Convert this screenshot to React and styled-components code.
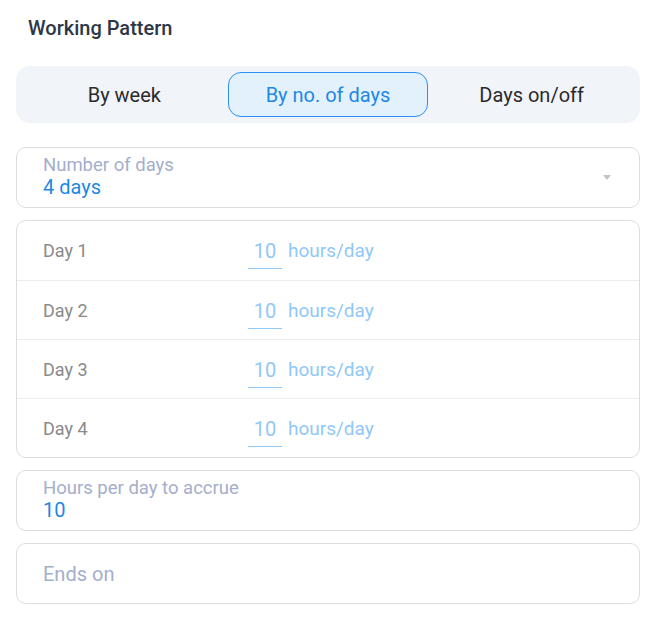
import React, { useState } from "react";
import styled, { createGlobalStyle } from "styled-components";

const GlobalStyle = createGlobalStyle`
  body {
    margin: 0;
    background: #fff;
    font-family: Roboto, "Noto Sans", Arial, sans-serif;
  }
`;

const tabs = ["By week", "By no. of days", "Days on/off"];
const days = ["Day 1", "Day 2", "Day 3", "Day 4"];

const App = () => {
  const [active, setActive] = useState(1);
  const [hours, setHours] = useState(days.map(() => "10"));

  return (
    <Wrapper>
      <GlobalStyle />
      <Title>Working Pattern</Title>

      <TabBar>
        {tabs.map((t, i) => (
          <Tab key={t} $active={i === active} onClick={() => setActive(i)}>
            {t}
          </Tab>
        ))}
      </TabBar>

      <Field $mt={24}>
        <FieldText>
          <Label>Number of days</Label>
          <Value>4 days</Value>
        </FieldText>
        <Caret />
      </Field>

      <DaysBox>
        {days.map((d, i) => (
          <DayRow key={d}>
            <DayLabel>{d}</DayLabel>
            <HoursInput
              value={hours[i]}
              onChange={(e) => {
                const next = [...hours];
                next[i] = e.target.value;
                setHours(next);
              }}
            />
            <Unit>hours/day</Unit>
          </DayRow>
        ))}
      </DaysBox>

      <Field $mt={12}>
        <FieldText>
          <Label>Hours per day to accrue</Label>
          <Value>10</Value>
        </FieldText>
      </Field>

      <Field $mt={12} $center>
        <Placeholder>Ends on</Placeholder>
      </Field>
    </Wrapper>
  );
};

const Wrapper = styled.div`
  width: 624px;
  margin-left: 16px;
  padding-top: 16px;
`;

const Title = styled.h1`
  margin: 0 0 0 12px;
  font-size: 20px;
  line-height: 24px;
  font-weight: 500;
  color: #2d3748;
`;

const TabBar = styled.div`
  margin-top: 26px;
  height: 57px;
  box-sizing: border-box;
  background: #f1f4f9;
  border-radius: 14px;
  padding: 6px 8px;
  display: grid;
  grid-template-columns: repeat(3, 1fr);
  gap: 3px;
`;

const Tab = styled.button`
  border: 1px solid ${(p) => (p.$active ? "#2b8ff0" : "transparent")};
  background: ${(p) => (p.$active ? "#e3f1fd" : "transparent")};
  color: ${(p) => (p.$active ? "#1e88e5" : "#2b2b2b")};
  border-radius: 13px;
  font-family: Roboto, "Noto Sans", Arial, sans-serif;
  font-size: 20px;
  cursor: pointer;
  padding: 0;
`;

const Field = styled.div`
  margin-top: ${(p) => p.$mt}px;
  height: 61px;
  box-sizing: border-box;
  border: 1.5px solid #dcdcdc;
  border-radius: 10px;
  padding: 0 26px;
  display: flex;
  align-items: ${(p) => (p.$center ? "center" : "flex-start")};
  justify-content: space-between;
`;

const FieldText = styled.div`
  padding-top: 6px;
  display: flex;
  flex-direction: column;
`;

const Label = styled.span`
  font-size: 18.5px;
  line-height: 22px;
  color: #a4aecb;
`;

const Value = styled.span`
  font-size: 20px;
  line-height: 23px;
  color: #1e88e5;
`;

const Placeholder = styled.span`
  font-size: 20px;
  color: #a4aecb;
`;

const Caret = styled.span`
  align-self: center;
  margin-right: 2px;
  width: 0;
  height: 0;
  border-left: 4.5px solid transparent;
  border-right: 4.5px solid transparent;
  border-top: 5px solid #c4c4c4;
`;

const DaysBox = styled.div`
  margin-top: 12px;
  border: 1.5px solid #dcdcdc;
  border-radius: 10px;
  overflow: hidden;
`;

const DayRow = styled.div`
  height: 59px;
  box-sizing: border-box;
  display: flex;
  align-items: center;
  padding-left: 26px;
  & + & {
    border-top: 1px solid #e9ecf1;
  }
`;

const DayLabel = styled.span`
  width: 205px;
  font-size: 18px;
  color: #8a8a8a;
`;

const HoursInput = styled.input`
  width: 34px;
  height: 37px;
  box-sizing: border-box;
  border: none;
  border-bottom: 1.5px solid #90c8f7;
  outline: none;
  background: transparent;
  font-family: Roboto, "Noto Sans", Arial, sans-serif;
  font-size: 20px;
  line-height: 22px;
  color: #90c8f7;
  text-align: center;
  padding: 8px 0 6px;
  margin: 0;
`;

const Unit = styled.span`
  margin-left: 6px;
  font-size: 19px;
  color: #90c8f7;
`;

export default App;
